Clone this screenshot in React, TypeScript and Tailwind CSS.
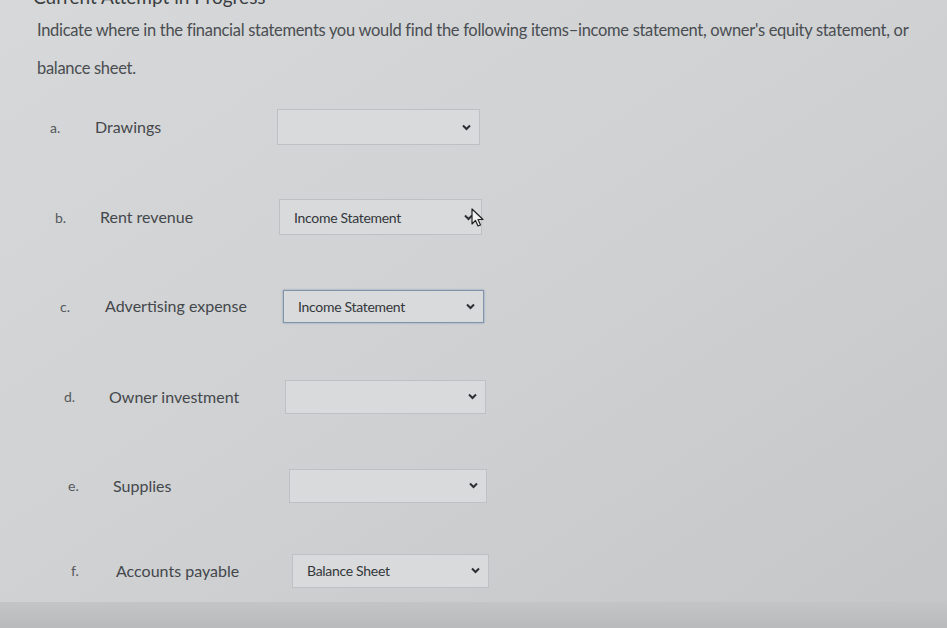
import React from 'react';

type Item = {
  letter: string;
  label: string;
  value: string;
  rowClass: string;
  labelClass: string;
  boxClass: string;
  focused?: boolean;
  cursor?: boolean;
};

const ITEMS: Item[] = [
  { letter: 'a.', label: 'Drawings', value: '', rowClass: 'h-[36px] pl-[50px]', labelClass: 'w-[182px]', boxClass: 'w-[203px] h-[36px]' },
  { letter: 'b.', label: 'Rent revenue', value: 'Income Statement', rowClass: 'h-[36px] pl-[55px] mt-[54px]', labelClass: 'w-[179px]', boxClass: 'w-[203px] h-[36px]', cursor: true },
  { letter: 'c.', label: 'Advertising expense', value: 'Income Statement', rowClass: 'h-[34px] pl-[60px] mt-[54px]', labelClass: 'w-[178px]', boxClass: 'w-[201px] h-[33px]', focused: true },
  { letter: 'd.', label: 'Owner investment', value: '', rowClass: 'h-[35px] pl-[64px] mt-[56px]', labelClass: 'w-[176px]', boxClass: 'w-[201px] h-[34px]' },
  { letter: 'e.', label: 'Supplies', value: '', rowClass: 'h-[35px] pl-[68px] mt-[54px]', labelClass: 'w-[176px]', boxClass: 'w-[198px] h-[34px]' },
  { letter: 'f.', label: 'Accounts payable', value: 'Balance Sheet', rowClass: 'h-[35px] pl-[71px] mt-[50px]', labelClass: 'w-[176px]', boxClass: 'w-[197px] h-[34px]' },
];

const Chevron = () => (
  <svg width="9" height="7" viewBox="0 0 9 7" className="text-[#2b2f33]">
    <path d="M1 1.5 L4.5 5 L8 1.5" fill="none" stroke="currentColor" strokeWidth="2" />
  </svg>
);

const Cursor = () => (
  <svg width="14" height="20" viewBox="0 0 14 20" className="absolute right-[-4px] top-[8px]">
    <path d="M1 1 L1 16 L4.5 12.5 L7 18 L9.5 17 L7 11.5 L12 11.5 Z" fill="#f2f2f2" stroke="#222" strokeWidth="1.2" strokeLinejoin="round" />
  </svg>
);

const App: React.FC = () => {
  return (
    <div className="w-[947px] h-[628px] overflow-hidden flex flex-col bg-gradient-to-br from-[#d6d8d9] via-[#cfd1d3] to-[#c4c6c7] text-[#3b3e42] font-['Lato','Liberation_Sans',sans-serif]">
      <div className="h-[6px] relative">
        <span className="absolute top-[-17px] left-[33px] text-[19px] text-[#3a3d40]">Current Attempt in Progress</span>
      </div>

      <div className="flex-1 flex flex-col">
        <p className="mt-[5px] ml-[37px] w-[885px] text-[16.5px] leading-[38px] tracking-[-0.3px] text-[#4a4d51]">
          Indicate where in the financial statements you would find the following items–income statement, owner's equity statement, or balance sheet.
        </p>

        <div className="flex flex-col mt-[22px]">
          {ITEMS.map((item) => (
            <div key={item.letter} className={`flex items-center ${item.rowClass}`}>
              <span className="w-[45px] text-[14px] text-[#55585b]">{item.letter}</span>
              <span className={`text-[16px] text-[#44474b] ${item.labelClass}`}>{item.label}</span>
              <div
                className={`relative flex items-center justify-between pl-[14px] pr-[8px] bg-[#d8dadc] ${item.boxClass} ${
                  item.focused ? 'border-[1.5px] border-[#7f93ab] shadow-[0_0_2px_rgba(80,110,150,0.5)]' : 'border border-[#bec1c3]'
                }`}
              >
                <span className="text-[14px] text-[#34373a] tracking-[-0.3px]">{item.value}</span>
                <Chevron />
                {item.cursor && <Cursor />}
              </div>
            </div>
          ))}
        </div>
      </div>

      <div className="h-[26px] bg-gradient-to-b from-[#c3c5c6] to-[#b8babb]" />
    </div>
  );
};

export default App;
